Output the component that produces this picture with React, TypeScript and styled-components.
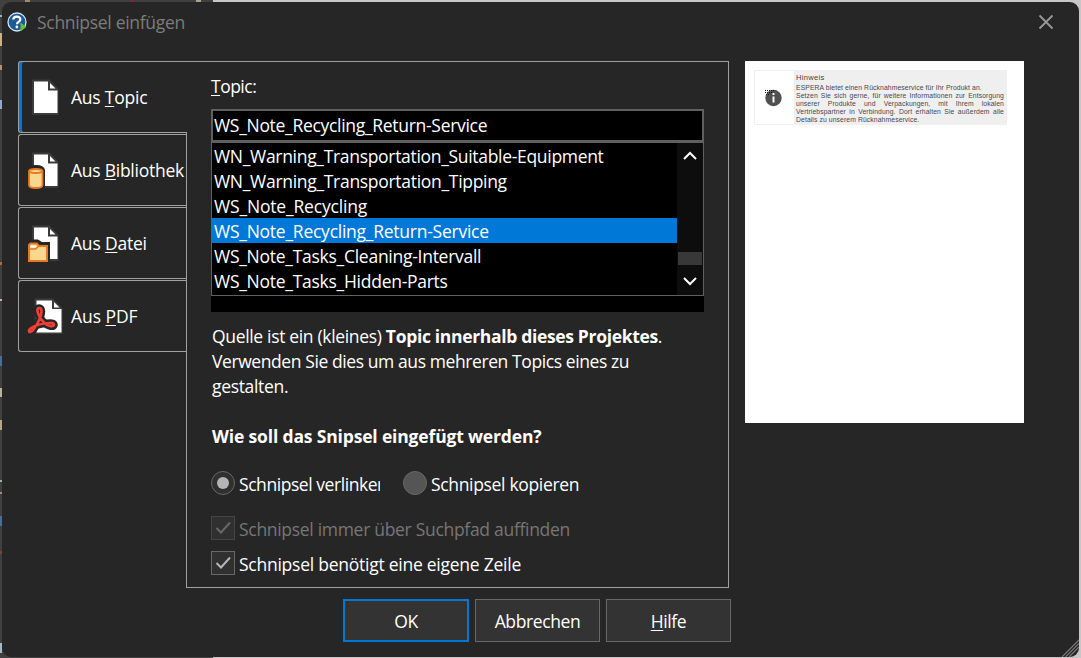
import React from 'react';
import styled, { createGlobalStyle } from 'styled-components';

const GlobalStyle = createGlobalStyle`
  * { box-sizing: border-box; }
  body { margin: 0; overflow: hidden; }
`;

const Desktop = styled.div`
  width: 1081px;
  height: 658px;
  padding: 2px 2px 1px;
  background:
    linear-gradient(to bottom, transparent 15px, #9fb0bd 15px 17px, transparent 17px 33px, #c9b28a 33px 46px, transparent 46px 65px, #b98f72 65px 70px, transparent 70px 100px, #93a9c9 100px 109px, transparent 109px 262px, #b06a3c 262px 265px, transparent 265px 299px, #c9b3a0 299px 301px, transparent 301px 356px, #4a6f96 356px 366px, transparent 366px 388px, #b8b49c 388px 397px, transparent 397px 420px, #b8a58c 420px 430px, transparent 430px 480px, #aaa 480px 482px, transparent 482px 492px, #a88 492px 494px, transparent 494px 516px, #4a6f96 516px 526px, transparent 526px 551px, #7a4040 551px 554px, transparent 554px 643px, #a9b8c0 643px 653px, transparent 653px) 0 0 / 2px 100% no-repeat,
    linear-gradient(to right, transparent 25px, #a08a70 25px 30px, transparent 30px 132px, #b02020 132px 133px, transparent 133px 196px, #b0a090 196px 201px, transparent 201px) 0 0 / 100% 2px no-repeat,
    linear-gradient(to right, #404040 213px, #c8c6c6 213px);
`;

const Dialog = styled.div`
  display: flex;
  flex-direction: column;
  width: 1077px;
  height: 655px;
  border-radius: 9px;
  overflow: hidden;
  background: #262626;
  color: #fff;
  font-family: 'Open Sans', 'Noto Sans', sans-serif;
  font-size: 17.5px;
  line-height: 25px;
  letter-spacing: -0.33px;
  white-space: nowrap;
`;

const TitleBar = styled.header`
  display: flex;
  align-items: center;
  height: 40px;
  padding: 0 25px 0 5px;
  color: #7c7c7c;
`;

const Title = styled.span`
  flex: 1;
  margin-left: 10px;
  padding-top: 1px;
  letter-spacing: -0.3px;
`;

const Content = styled.main`
  display: flex;
  align-items: flex-start;
  padding: 19px 0 0 16px;
`;

const TabList = styled.nav`
  display: flex;
  flex-direction: column;
  gap: 1px;
  width: 168px;
`;

const Tab = styled.div<{ $active?: boolean }>`
  display: flex;
  align-items: center;
  height: 72px;
  border: 1px solid #a0a0a0;
  border-right: 0;
  border-radius: 3px 0 0 3px;
  background: #262626;
  ${(p) => p.$active && `
    position: relative;
    z-index: 1;
    margin-right: -1px;
    box-shadow: inset 3px 0 0 #0078d7;
  `}
`;

const TabIcon = styled.svg`
  width: 40px;
  height: 40px;
  margin: 0 5px 0 7px;
  flex: none;
`;

const Spaced = styled.span<{ $track?: number }>`
  ${(p) => p.$track !== undefined && `letter-spacing: ${p.$track}px;`}
`;

const Key = styled.span`
  text-decoration: underline;
  text-decoration-thickness: 1px;
  text-underline-offset: 2px;
  text-decoration-skip-ink: none;
`;

const Panel = styled.section`
  width: 543px;
  height: 527px;
  padding: 12px 24px 0;
  border: 1px solid #a0a0a0;
`;

const Label = styled.div`
  height: 35px;
`;

const Field = styled.div`
  width: 493px;
  height: 33px;
  padding: 2px 1px;
  border: 2px solid #606060;
`;

const Picker = styled.div`
  width: 493px;
  height: 203px;
  background: #000;
`;

const ListBox = styled.div`
  display: flex;
  width: 493px;
  height: 154px;
  border: 1px solid #606060;
`;

const Options = styled.div`
  flex: 1;
`;

const Option = styled.div<{ $selected?: boolean }>`
  height: 25px;
  padding: 1px 0 0 2px;
  background: ${(p) => (p.$selected ? '#0078d7' : 'transparent')};
`;

const ScrollBar = styled.div`
  display: flex;
  flex-direction: column;
  align-items: center;
  width: 26px;
  padding: 7px 0 8px;
  background: #0d0d0d;
`;

const Thumb = styled.div`
  width: 24px;
  height: 13px;
  margin: auto 0 11px;
  background: #383838;
`;

const Description = styled.p`
  margin: 12px 0 0 1px;
`;

const Question = styled.h2`
  margin: 25px 0 0 1px;
  font-size: 17.5px;
  line-height: 25px;
  font-weight: 700;
  letter-spacing: -0.16px;
`;

const Choices = styled.div`
  display: flex;
  margin: 22px 0 21px;
`;

const Choice = styled.label<{ $disabled?: boolean; $width?: number }>`
  display: flex;
  align-items: center;
  gap: 4px;
  height: 24px;
  margin-bottom: 11px;
  color: ${(p) => (p.$disabled ? '#767676' : '#fff')};
  ${(p) => p.$width && `width: ${p.$width}px; overflow: hidden; margin-right: 23px;`}
  ${Choices} & { margin-bottom: 0; }
  span { padding-top: 3px; }
`;

const Radio = styled.i<{ $checked?: boolean }>`
  display: grid;
  place-items: center;
  flex: none;
  width: 24px;
  height: 24px;
  border: 1.5px solid #686868;
  border-radius: 50%;
  background: ${(p) => (p.$checked ? '#303030' : '#555')};
  &::after {
    content: '';
    width: 12px;
    height: 12px;
    border-radius: 50%;
    background: ${(p) => (p.$checked ? '#b4b4b4' : 'transparent')};
  }
`;

const CheckSvg = styled.svg`
  width: 24px;
  height: 24px;
  flex: none;
`;

const Preview = styled.aside`
  width: 279px;
  height: 362px;
  margin-left: 16px;
  padding: 9px;
  background: #fff;
`;

const Note = styled.div`
  display: flex;
  width: 253px;
  height: 55px;
  border: 1px solid #efefef;
  background: #fff;
`;

const NoteIcon = styled.div`
  width: 39px;
  padding: 17px 0 0 10px;
`;

const NoteText = styled.div`
  flex: 1;
  padding: 3px 2px 0;
  background: #efefef;
  color: #484850;
  font-family: 'Liberation Sans', Arial, sans-serif;
  font-size: 6.8px;
  line-height: 8px;
  letter-spacing: 0.1px;
`;

const NoteTitle = styled.div`
  height: 10px;
  font-size: 7.6px;
  letter-spacing: 0.3px;
  color: #444;
`;

const NoteLine = styled.div<{ $last?: boolean; $track?: number }>`
  height: 8px;
  text-align-last: ${(p) => (p.$last ? 'left' : 'justify')};
  ${(p) => p.$track !== undefined && `letter-spacing: ${p.$track}px;`}
`;

const Footer = styled.footer`
  display: flex;
  flex: 1;
  align-items: flex-start;
  padding: 11px 0 0 341px;
`;

const Button = styled.button<{ $primary?: boolean }>`
  width: ${(p) => (p.$primary ? 126 : 125)}px;
  height: 43px;
  margin-right: 6px;
  padding: 2px 0 0;
  border: ${(p) => (p.$primary ? '2px solid #0078d7' : '1px solid #686868')};
  background: #333;
  color: #fff;
  font: inherit;
  letter-spacing: -0.38px;
`;

const Grip = styled.svg`
  align-self: flex-end;
  margin-left: auto;
  width: 18px;
  height: 18px;
`;

const Sheet = () => (
  <g>
    <path d="M6 2.500h17.500l9 9.500v26H6z" fill="#3b3b3b" />
    <path d="M8 4.500h14v9h9.500v22.500H8z" fill="#fff" />
    <path d="M24 6v5.500h5.500z" fill="#fff" />
  </g>
);

const DocIcon = () => (
  <TabIcon viewBox="0 0 40 40"><Sheet /></TabIcon>
);

const LibraryIcon = () => (
  <TabIcon viewBox="0 0 40 40">
    <Sheet />
    <path d="M0 19q2-4 10-4t9 5v19H0z" fill="#262626" />
    <path d="M3 21v14c0 4 13.500 4 13.500 0V21" fill="#f8d78f" stroke="#e87722" strokeWidth="1.800" />
    <ellipse cx="9.750" cy="21" rx="6.750" ry="2" fill="#f8d78f" stroke="#e87722" strokeWidth="1.800" />
  </TabIcon>
);

const FileIcon = () => (
  <TabIcon viewBox="0 0 40 40">
    <Sheet />
    <path d="M0 19l2-2.500h10l4 2.500h8V39H0z" fill="#262626" />
    <path d="M3 38V22l1.500-1.500h6.500l2 2.500h8V38z" fill="#f8d78f" stroke="#e87722" strokeWidth="2" />
    <path d="M3.500 26h6l3-2.500" fill="none" stroke="#e87722" strokeWidth="1.600" />
    <path d="M4.500 23.500h5.500" stroke="#fff" strokeWidth="2" />
  </TabIcon>
);

const knot = 'M11.500 15C10.500 11 15.500 11 15.500 15C15.500 20 12 27 8.500 32C6 36 2.500 37.500 3 34.500C3.500 32 11 28.500 18 27.500C25 26.500 28.500 27 28 29C27 31.500 21.500 30 18.500 27C14 22.500 12 18.500 11.500 15z';

const PdfIcon = () => (
  <TabIcon viewBox="0 0 40 40">
    <path d="M8.500 2.500h18l10 9.500v26H8.500z" fill="#3b3b3b" />
    <path d="M10.500 4.500h15.500v8.500h9.500V36.500h-25z" fill="#fff" />
    <path d="M28 6v5.500h5.500z" fill="#fff" />
    <path d={knot} fill="#262626" stroke="#262626" strokeWidth="7.500" strokeLinejoin="round" />
    <path d={knot} fill="none" stroke="#ef3e36" strokeWidth="2.600" strokeLinejoin="round" />
  </TabIcon>
);

const HelpLogo = () => (
  <svg width="20" height="20" viewBox="0 0 20 20">
    <circle cx="10" cy="10" r="9" fill="#1b5c97" stroke="#d5e2ee" strokeWidth="1.300" />
    <path d="M6.300 7.500C6.500 3.600 13.500 3.800 13.300 7.500c-.2 2.500-3.300 2.300-3.300 4.700" fill="none" stroke="#fff" strokeWidth="2.300" />
    <circle cx="9.900" cy="15" r="1.400" fill="#fff" />
    <path d="M13.500 10.500l6 4.500-6 4z" fill="#5fc22e" />
  </svg>
);

const Check = ({ dim }: { dim?: boolean }) => (
  <CheckSvg viewBox="0 0 24 24">
    <rect x=".5" y=".5" width="23" height="23" fill="#303030" stroke={dim ? '#444' : '#686868'} />
    <path d="M5.500 12l4.500 4.500 9-10" fill="none" stroke={dim ? '#686868' : '#b8b8b8'} strokeWidth="1.900" />
  </CheckSvg>
);

const options: { name: string; track: number; selected?: boolean }[] = [
  { name: 'WN_Warning_Transportation_Suitable-Equipment', track: -0.31 },
  { name: 'WN_Warning_Transportation_Tipping', track: -0.3 },
  { name: 'WS_Note_Recycling', track: -0.17 },
  { name: 'WS_Note_Recycling_Return-Service', track: -0.25, selected: true },
  { name: 'WS_Note_Tasks_Cleaning-Intervall', track: -0.27 },
  { name: 'WS_Note_Tasks_Hidden-Parts', track: -0.27 },
];

const tabs = [
  { icon: <DocIcon />, key: 'T', rest: 'opic', track: -0.22 },
  { icon: <LibraryIcon />, key: 'B', rest: 'ibliothek', track: -0.25 },
  { icon: <FileIcon />, key: 'D', rest: 'atei', track: -0.2 },
  { icon: <PdfIcon />, key: 'P', rest: 'DF', track: -0.05 },
];

export default function App() {
  return (
    <Desktop>
      <GlobalStyle />
      <Dialog>
        <TitleBar>
          <HelpLogo />
          <Title>Schnipsel einfügen</Title>
          <svg width="16" height="16" viewBox="0 0 16 16">
            <path d="M1.500 1.500l13 13M14.500 1.500l-13 13" stroke="#999" strokeWidth="1.800" />
          </svg>
        </TitleBar>
        <Content>
          <TabList>
            {tabs.map((t, i) => (
              <Tab key={t.key} $active={i === 0}>
                {t.icon}
                <Spaced $track={t.track}>Aus <Key>{t.key}</Key>{t.rest}</Spaced>
              </Tab>
            ))}
          </TabList>
          <Panel>
            <Label><Spaced $track={-0.5}><Key>T</Key>opic:</Spaced></Label>
            <Picker>
              <Field><Spaced $track={-0.3}>WS_Note_Recycling_Return-Service</Spaced></Field>
              <ListBox>
                <Options>
                  {options.map((o) => (
                    <Option key={o.name} $selected={o.selected}>
                      <Spaced $track={o.track}>{o.name}</Spaced>
                    </Option>
                  ))}
                </Options>
                <ScrollBar>
                  <svg width="14" height="11" viewBox="0 0 14 11"><path d="M1 9l6-6 6 6" fill="none" stroke="#fff" strokeWidth="2" /></svg>
                  <Thumb />
                  <svg width="14" height="11" viewBox="0 0 14 11"><path d="M1 2l6 6 6-6" fill="none" stroke="#fff" strokeWidth="2" /></svg>
                </ScrollBar>
              </ListBox>
            </Picker>
            <Description>
              <Spaced $track={-0.33}>Quelle ist ein (kleines) </Spaced>
              <Spaced as="b" $track={-0.33}>Topic innerhalb dieses Projektes</Spaced>.<br />
              <Spaced $track={-0.41}>Verwenden Sie dies um aus mehreren Topics eines zu</Spaced><br />
              gestalten.
            </Description>
            <Question>Wie soll das Snipsel eingefügt werden?</Question>
            <Choices>
              <Choice $width={169}><Radio $checked /><Spaced $track={-0.44}>Schnipsel verlinken</Spaced></Choice>
              <Choice><Radio /><Spaced>Schnipsel kopieren</Spaced></Choice>
            </Choices>
            <Choice $disabled><Check dim /><Spaced $track={-0.3}>Schnipsel immer über Suchpfad auffinden</Spaced></Choice>
            <Choice><Check /><Spaced $track={-0.25}>Schnipsel benötigt eine eigene Zeile</Spaced></Choice>
          </Panel>
          <Preview>
            <Note>
              <NoteIcon>
                <svg width="18" height="18" viewBox="0 0 18 18">
                  <circle cx="8.500" cy="9" r="8.200" fill="#505050" />
                  <path d="M0 1.500h9M0 3.500h7M1 5.500h4" stroke="#111" strokeDasharray="1 1" />
                  <path d="M8.500 7.500v6M8.500 4v2" fill="none" stroke="#fff" strokeWidth="2" />
                </svg>
              </NoteIcon>
              <NoteText>
                <NoteTitle>Hinweis</NoteTitle>
                <NoteLine $last>ESPERA bietet einen Rücknahmeservice für Ihr Produkt an.</NoteLine>
                <NoteLine>Setzen Sie sich gerne, für weitere Informationen zur Entsorgung</NoteLine>
                <NoteLine>unserer Produkte und Verpackungen, mit Ihrem lokalen</NoteLine>
                <NoteLine>Vertriebspartner in Verbindung. Dort erhalten Sie außerdem alle</NoteLine>
                <NoteLine $last>Details zu unserem Rücknahmeservice.</NoteLine>
              </NoteText>
            </Note>
          </Preview>
        </Content>
        <Footer>
          <Button $primary>OK</Button>
          <Button>Abbrechen</Button>
          <Button><Key>H</Key>ilfe</Button>
          <Grip viewBox="0 0 18 18"><path d="M1 18L18 1M4.500 18L18 4.500M8 18L18 8" stroke="#7c7c7c" strokeWidth="1.100" /></Grip>
        </Footer>
      </Dialog>
    </Desktop>
  );
}
